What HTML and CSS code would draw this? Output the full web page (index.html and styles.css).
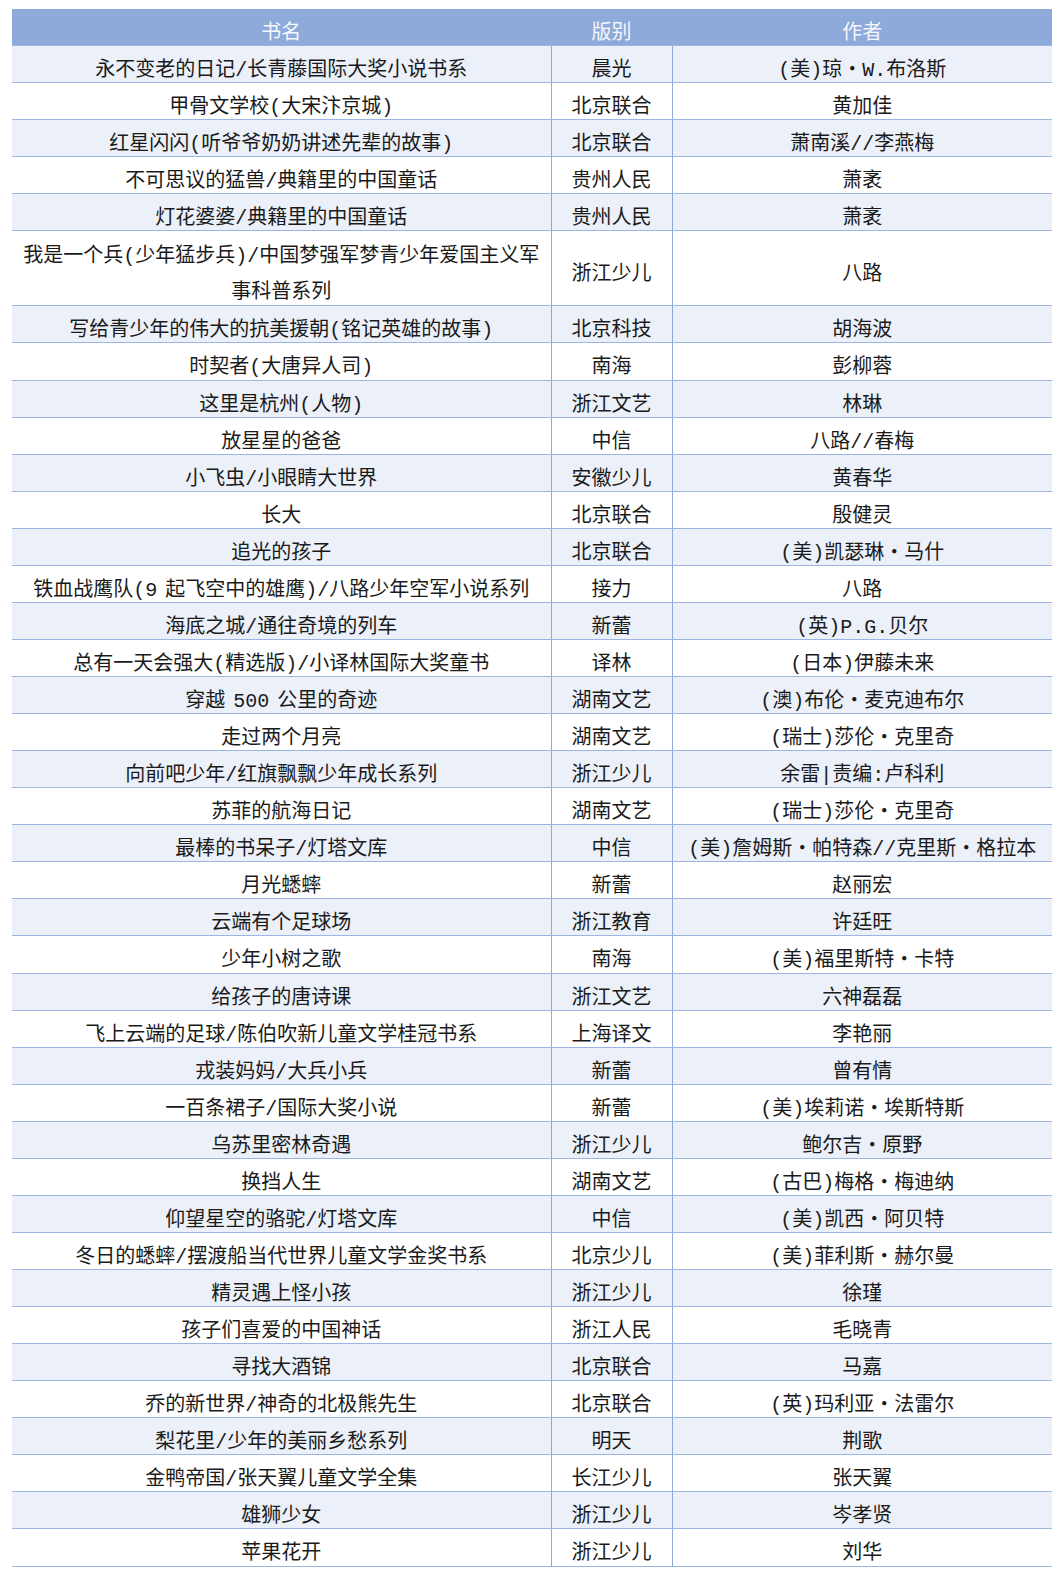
FILE: index.html
```html
<!DOCTYPE html>
<html lang="zh-CN">
<head>
<meta charset="utf-8">
<title>书目</title>
<link rel="stylesheet" href="styles.css">
</head>
<body>
<div class="page">
<table class="books">
<colgroup><col class="c-title"><col class="c-pub"><col class="c-author"></colgroup>
<thead>
<tr><th>书名</th><th>版别</th><th>作者</th></tr>
</thead>
<tbody>
<tr><td>永不变老的日记/长青藤国际大奖小说书系</td><td>晨光</td><td>(美)琼・W.布洛斯</td></tr>
<tr><td>甲骨文学校(大宋汴京城)</td><td>北京联合</td><td>黄加佳</td></tr>
<tr><td>红星闪闪(听爷爷奶奶讲述先辈的故事)</td><td>北京联合</td><td>萧南溪//李燕梅</td></tr>
<tr><td>不可思议的猛兽/典籍里的中国童话</td><td>贵州人民</td><td>萧袤</td></tr>
<tr><td>灯花婆婆/典籍里的中国童话</td><td>贵州人民</td><td>萧袤</td></tr>
<tr class="tall"><td><div class="two-line">我是一个兵(少年猛步兵)/中国梦强军梦青少年爱国主义军<br>事科普系列</div></td><td>浙江少儿</td><td>八路</td></tr>
<tr><td>写给青少年的伟大的抗美援朝(铭记英雄的故事)</td><td>北京科技</td><td>胡海波</td></tr>
<tr><td>时契者(大唐异人司)</td><td>南海</td><td>彭柳蓉</td></tr>
<tr><td>这里是杭州(人物)</td><td>浙江文艺</td><td>林琳</td></tr>
<tr><td>放星星的爸爸</td><td>中信</td><td>八路//春梅</td></tr>
<tr><td>小飞虫/小眼睛大世界</td><td>安徽少儿</td><td>黄春华</td></tr>
<tr><td>长大</td><td>北京联合</td><td>殷健灵</td></tr>
<tr><td>追光的孩子</td><td>北京联合</td><td>(美)凯瑟琳・马什</td></tr>
<tr><td>铁血战鹰队(9 起飞空中的雄鹰)/八路少年空军小说系列</td><td>接力</td><td>八路</td></tr>
<tr><td>海底之城/通往奇境的列车</td><td>新蕾</td><td>(英)P.G.贝尔</td></tr>
<tr><td>总有一天会强大(精选版)/小译林国际大奖童书</td><td>译林</td><td>(日本)伊藤未来</td></tr>
<tr><td>穿越 500 公里的奇迹</td><td>湖南文艺</td><td>(澳)布伦・麦克迪布尔</td></tr>
<tr><td>走过两个月亮</td><td>湖南文艺</td><td>(瑞士)莎伦・克里奇</td></tr>
<tr><td>向前吧少年/红旗飘飘少年成长系列</td><td>浙江少儿</td><td>余雷|责编:卢科利</td></tr>
<tr><td>苏菲的航海日记</td><td>湖南文艺</td><td>(瑞士)莎伦・克里奇</td></tr>
<tr><td>最棒的书呆子/灯塔文库</td><td>中信</td><td>(美)詹姆斯・帕特森//克里斯・格拉本</td></tr>
<tr><td>月光蟋蟀</td><td>新蕾</td><td>赵丽宏</td></tr>
<tr><td>云端有个足球场</td><td>浙江教育</td><td>许廷旺</td></tr>
<tr><td>少年小树之歌</td><td>南海</td><td>(美)福里斯特・卡特</td></tr>
<tr><td>给孩子的唐诗课</td><td>浙江文艺</td><td>六神磊磊</td></tr>
<tr><td>飞上云端的足球/陈伯吹新儿童文学桂冠书系</td><td>上海译文</td><td>李艳丽</td></tr>
<tr><td>戎装妈妈/大兵小兵</td><td>新蕾</td><td>曾有情</td></tr>
<tr><td>一百条裙子/国际大奖小说</td><td>新蕾</td><td>(美)埃莉诺・埃斯特斯</td></tr>
<tr><td>乌苏里密林奇遇</td><td>浙江少儿</td><td>鲍尔吉・原野</td></tr>
<tr><td>换挡人生</td><td>湖南文艺</td><td>(古巴)梅格・梅迪纳</td></tr>
<tr><td>仰望星空的骆驼/灯塔文库</td><td>中信</td><td>(美)凯西・阿贝特</td></tr>
<tr><td>冬日的蟋蟀/摆渡船当代世界儿童文学金奖书系</td><td>北京少儿</td><td>(美)菲利斯・赫尔曼</td></tr>
<tr><td>精灵遇上怪小孩</td><td>浙江少儿</td><td>徐瑾</td></tr>
<tr><td>孩子们喜爱的中国神话</td><td>浙江人民</td><td>毛晓青</td></tr>
<tr><td>寻找大酒锦</td><td>北京联合</td><td>马嘉</td></tr>
<tr><td>乔的新世界/神奇的北极熊先生</td><td>北京联合</td><td>(英)玛利亚・法雷尔</td></tr>
<tr><td>梨花里/少年的美丽乡愁系列</td><td>明天</td><td>荆歌</td></tr>
<tr><td>金鸭帝国/张天翼儿童文学全集</td><td>长江少儿</td><td>张天翼</td></tr>
<tr><td>雄狮少女</td><td>浙江少儿</td><td>岑孝贤</td></tr>
<tr><td>苹果花开</td><td>浙江少儿</td><td>刘华</td></tr>
</tbody>
</table>
</div>
</body>
</html>
```

FILE: styles.css
```css
html, body {
  margin: 0;
  padding: 0;
  background: #ffffff;
}

.page {
  padding: 9px 8px 0 12px;
}

.books {
  width: 1040px;
  border-collapse: collapse;
  table-layout: fixed;
  font-family: "Liberation Mono", "Noto Sans CJK SC", monospace;
  font-size: 20px;
  word-spacing: -4px;
  color: #1a1a1a;
}

.c-title { width: 539px; }
.c-pub { width: 121px; }
.c-author { width: 380px; }

.books th,
.books td {
  height: 22.07px;
  padding: 14px 4px 0;
  text-align: center;
  vertical-align: middle;
  line-height: 22px;
  border-bottom: 1px solid #9cb5e2;
  white-space: nowrap;
}

.books th + th,
.books td + td {
  border-left: 1px solid #8eaadb;
}

.books th {
  background: #8eaadb;
  color: #f4f7fc;
  font-weight: 400;
}

.books tbody tr:nth-child(odd) td {
  background: #ebf0f9;
}

.books tr.tall td {
  height: 60px;
}

.books tr.tall td:first-child {
  padding-top: 8px;
  vertical-align: top;
}

.two-line {
  height: 66px;
  line-height: 36px;
}
```
